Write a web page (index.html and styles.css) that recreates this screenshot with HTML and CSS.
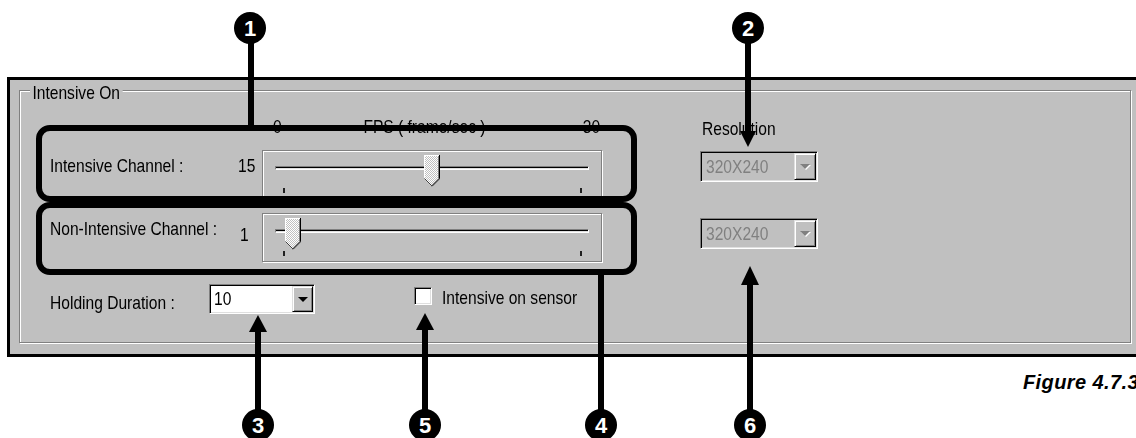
FILE: index.html
```html
<!DOCTYPE html>
<html>
<head>
<meta charset="utf-8">
<title>Intensive On</title>
<link rel="stylesheet" href="styles.css">
</head>
<body>
<div class="page">
  <div class="frame">
    <div class="group">
      <span class="legend">Intensive On</span>

      <div class="hdr">
        <div class="hdr-spacer"></div>
        <div class="scale">
          <span class="n">0</span>
          <span class="n mid fps">FPS ( frame/sec )</span>
          <span class="n end">30</span>
        </div>
        <div class="res-label"><span class="n">Resolution</span></div>
      </div>

      <div class="row row1">
        <div class="lbl"><span class="n">Intensive Channel :</span></div>
        <div class="val"><span class="n">15</span></div>
        <div class="slider">
          <div class="track"></div>
          <div class="ticks"><i class="tick"></i><i class="tick"></i></div>
          <svg class="thumb" style="left:160.5px" width="16" height="32" viewBox="0 0 16 32">
            <defs>
              <pattern id="dotA" width="2" height="2" patternUnits="userSpaceOnUse">
                <rect width="2" height="2" fill="#c0c0c0"/>
                <rect width="1" height="1" fill="#fff"/>
                <rect x="1" y="1" width="1" height="1" fill="#fff"/>
              </pattern>
            </defs>
            <path d="M0 0H16V23.5L8 31.5L0 23.5Z" fill="url(#dotA)"/>
            <path d="M0.5 23.5V0.5H15" stroke="#fff" fill="none"/>
            <path d="M0.5 23.5L8 31" stroke="#404040" fill="none"/>
            <path d="M15.5 0V23.8L8 31.3" stroke="#000" fill="none"/>
            <path d="M14.5 1V23.4L8 29.9" stroke="#808080" fill="none"/>
          </svg>
        </div>
        <div class="combo disabled c1">
          <span class="ctext"><span class="n">320X240</span></span>
          <span class="cbtn"><i class="arrow"></i></span>
        </div>
      </div>

      <div class="row row2">
        <div class="lbl"><span class="n">Non-Intensive Channel :</span></div>
        <div class="val val2"><span class="n">1</span></div>
        <div class="slider">
          <div class="track"></div>
          <div class="ticks"><i class="tick"></i><i class="tick"></i></div>
          <svg class="thumb" style="left:21.9px" width="16" height="32" viewBox="0 0 16 32">
            <defs>
              <pattern id="dotB" width="2" height="2" patternUnits="userSpaceOnUse">
                <rect width="2" height="2" fill="#c0c0c0"/>
                <rect width="1" height="1" fill="#fff"/>
                <rect x="1" y="1" width="1" height="1" fill="#fff"/>
              </pattern>
            </defs>
            <path d="M0 0H16V23.5L8 31.5L0 23.5Z" fill="url(#dotB)"/>
            <path d="M0.5 23.5V0.5H15" stroke="#fff" fill="none"/>
            <path d="M0.5 23.5L8 31" stroke="#404040" fill="none"/>
            <path d="M15.5 0V23.8L8 31.3" stroke="#000" fill="none"/>
            <path d="M14.5 1V23.4L8 29.9" stroke="#808080" fill="none"/>
          </svg>
        </div>
        <div class="combo disabled c2">
          <span class="ctext"><span class="n">320X240</span></span>
          <span class="cbtn"><i class="arrow"></i></span>
        </div>
      </div>

      <div class="row row3">
        <div class="lbl lbl3"><span class="n">Holding Duration :</span></div>
        <div class="combo hold">
          <span class="ctext"><span class="n">10</span></span>
          <span class="cbtn"><i class="arrow"></i></span>
        </div>
        <span class="check"></span>
        <span class="chk-label"><span class="n">Intensive on sensor</span></span>
      </div>
    </div>
  </div>
  <p class="caption">Figure 4.7.3</p>

  <svg class="callouts" width="1136" height="438" viewBox="0 0 1136 438">
    <g fill="none" stroke="#000" stroke-width="6">
      <rect x="39" y="128" width="595" height="71" rx="11"/>
      <rect x="39" y="205" width="595" height="67" rx="11"/>
      <line x1="251" y1="40" x2="251" y2="128"/>
      <line x1="601" y1="272" x2="601" y2="415"/>
      <line x1="748" y1="40" x2="748" y2="134"/>
      <line x1="750" y1="283" x2="750" y2="415"/>
      <line x1="258" y1="330" x2="258" y2="415"/>
      <line x1="425" y1="328" x2="425" y2="415"/>
    </g>
    <g fill="#000">
      <polygon points="740,131 756,131 748,147"/>
      <polygon points="741,285 759,285 750,266"/>
      <polygon points="249,332 267,332 258,315"/>
      <polygon points="416,330 434,330 425,313"/>
      <circle cx="250" cy="28" r="16"/>
      <circle cx="748" cy="28" r="16"/>
      <circle cx="258" cy="425" r="16"/>
      <circle cx="425" cy="425" r="16"/>
      <circle cx="601" cy="425" r="16"/>
      <circle cx="750" cy="425" r="16"/>
    </g>
    <g class="num" fill="#fff" text-anchor="middle">
      <text x="250" y="36">1</text>
      <text x="748" y="36">2</text>
      <text x="258" y="433">3</text>
      <text x="425" y="433">5</text>
      <text x="601" y="433">4</text>
      <text x="750" y="433">6</text>
    </g>
  </svg>
</div>
</body>
</html>
```
FILE: styles.css
```css
* { box-sizing: border-box; }
html, body { margin: 0; padding: 0; background: #fff; }
body {
  font-family: "Liberation Sans", Arial, sans-serif;
  font-size: 19px;
  line-height: 20px;
  color: #000;
}
.page { position: relative; width: 1136px; height: 438px; overflow: hidden; }

/* narrow rendering of the dialog font (tall, condensed look of the scaled dialog) */
.n { display: inline-block; transform: scaleX(0.82); transform-origin: 0 50%; white-space: nowrap; }
.n.mid { transform-origin: 50% 50%; }
.n.end { transform-origin: 100% 50%; }

.frame {
  margin: 77px 0 0 7px;
  width: 1135px;
  height: 280px;
  border: 3px solid #000;
  border-right: 0;
  background: #c0c0c0;
  padding: 10px 0 0 9px;
}
.group {
  position: relative;
  width: 1112px;
  height: 253px;
  border: 1px solid #808080;
  box-shadow: inset 1px 1px 0 #fff, 1px 1px 0 #fff;
  padding: 26px 0 0 30px;
}
.legend {
  position: absolute;
  left: 10px;
  top: -8px;
  padding: 0 3px;
  background: #c0c0c0;
  white-space: nowrap;
  transform: scaleX(0.82);
  transform-origin: 0 50%;
}

.hdr { display: flex; height: 20px; }
.hdr-spacer { width: 212px; }
.scale {
  width: 340px;
  display: flex;
  justify-content: space-between;
  padding: 0 2px 0 11px;
  white-space: nowrap;
}
.fps { margin-right: 14px; }
.res-label { margin-left: 98px; padding: 2px 0 0 2px; }

.row { display: flex; align-items: flex-start; white-space: nowrap; }
.row1 { margin-top: 13px; }
.row2 { margin-top: 14px; }
.row3 { margin-top: 22px; }
.lbl { width: 188px; padding-top: 6px; }
.val { width: 19px; padding-top: 6px; }
.val2 { padding-top: 12px; padding-left: 2px; }
.lbl3 { width: 159px; padding-top: 9px; }

.slider {
  position: relative;
  width: 340px;
  height: 49px;
  margin-left: 5px;
  border: 1px solid #808080;
  box-shadow: inset 1px 1px 0 #fff, 1px 1px 0 #fff;
  padding: 15px 0 0 12px;
}
.track {
  width: 314px;
  height: 4px;
  border: 1px solid;
  border-color: #808080 #fff #fff #808080;
  background: linear-gradient(#000 50%, #dfdfdf 50%);
}
.ticks {
  display: flex;
  justify-content: space-between;
  width: 299px;
  margin: 18px 0 0 8px;
}
.tick { display: block; width: 2px; height: 5px; background: #202020; }
.thumb { position: absolute; top: 4px; display: block; }

.combo {
  display: flex;
  width: 118px;
  height: 31px;
  margin-left: 98px;
  border: 1px solid;
  border-color: #808080 #fff #fff #808080;
  box-shadow: inset 1px 1px 0 #000, inset -1px -1px 0 #dfdfdf;
  padding: 1px;
  background: #c0c0c0;
}
.c1 { margin-top: 1px; }
.c2 { margin-top: 5px; }
.ctext { flex: 1; align-self: center; padding-left: 4px; }
.disabled .ctext { color: #808080; }
.cbtn {
  width: 22px;
  display: flex;
  align-items: center;
  justify-content: center;
  border: 1px solid;
  border-color: #dfdfdf #000 #000 #dfdfdf;
  box-shadow: inset 1px 1px 0 #fff, inset -1px -1px 0 #808080;
  background: #c0c0c0;
}
.arrow {
  display: block;
  width: 0;
  height: 0;
  border-left: 5px solid transparent;
  border-right: 5px solid transparent;
  border-top: 5px solid #000;
}
.disabled .arrow { border-top-color: #808080; filter: drop-shadow(1px 1px 0 #fff); }

.hold { width: 106px; height: 30px; margin-left: 0; background: #fff; }
.hold .ctext { padding-left: 3px; }
.hold .cbtn { width: 21px; }

.check {
  display: block;
  width: 18px;
  height: 18px;
  margin: 3px 0 0 99px;
  border: 1px solid;
  border-color: #808080 #fff #fff #808080;
  box-shadow: inset 1px 1px 0 #000, inset -1px -1px 0 #dfdfdf;
  background: #fff;
}
.chk-label { margin: 4px 0 0 10px; }

.caption {
  margin: 14px 0 0 1023px;
  white-space: nowrap;
  font-family: "Liberation Sans", Arial, sans-serif;
  font-style: italic;
  font-weight: bold;
  font-size: 20px;
  line-height: 22px;
  letter-spacing: 0.4px;
}

.callouts { position: absolute; left: 0; top: 0; pointer-events: none; }
.num text {
  font-family: "Liberation Sans", Arial, sans-serif;
  font-weight: bold;
  font-size: 22px;
}
```
